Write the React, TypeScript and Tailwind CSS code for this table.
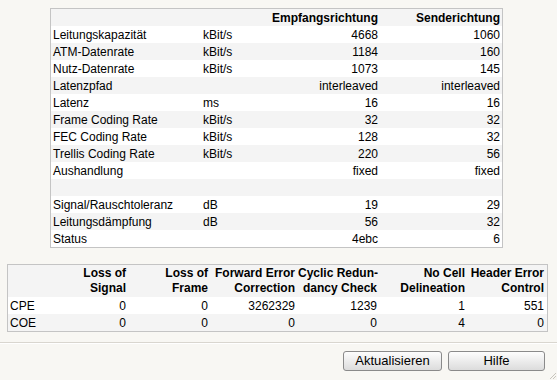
const rows: [string, string, string, string][] = [
  ['Leitungskapazität', 'kBit/s', '4668', '1060'],
  ['ATM-Datenrate', 'kBit/s', '1184', '160'],
  ['Nutz-Datenrate', 'kBit/s', '1073', '145'],
  ['Latenzpfad', '', 'interleaved', 'interleaved'],
  ['Latenz', 'ms', '16', '16'],
  ['Frame Coding Rate', 'kBit/s', '32', '32'],
  ['FEC Coding Rate', 'kBit/s', '128', '32'],
  ['Trellis Coding Rate', 'kBit/s', '220', '56'],
  ['Aushandlung', '', 'fixed', 'fixed'],
  ['', '', '', ''],
  ['Signal/Rauschtoleranz', 'dB', '19', '29'],
  ['Leitungsdämpfung', 'dB', '56', '32'],
  ['Status', '', '4ebc', '6'],
]

const errorHeads: [string, string][] = [
  ['Loss of', 'Signal'],
  ['Loss of', 'Frame'],
  ['Forward Error', 'Correction'],
  ['Cyclic Redun-', 'dancy Check'],
  ['No Cell', 'Delineation'],
  ['Header Error', 'Control'],
]

const errorRows: [string, string[]][] = [
  ['CPE', ['0', '0', '3262329', '1239', '1', '551']],
  ['COE', ['0', '0', '0', '0', '4', '0']],
]

const lineCols = 'grid grid-cols-[150px_70px_110px_1fr]'
const errCols = 'grid grid-cols-[40px_81px_82px_87px_82px_88px_1fr]'

export default function App() {
  return (
    <div
      className="w-[557px] h-[380px] bg-[#f8f7f3] text-black text-[12px] overflow-hidden flex flex-col relative"
      style={{ fontFamily: '"Liberation Sans", Arial, sans-serif' }}
    >
      {/* line statistics */}
      <div className="mt-[8px] ml-[50px] w-[453px] border border-[#c4c4c4] bg-white">
        <div className={`${lineCols} h-[17px] items-center bg-[#f4f4f4] font-bold`}>
          <span />
          <span />
          <span className="text-right pr-[3px]">Empfangsrichtung</span>
          <span className="text-right pr-[2px]">Senderichtung</span>
        </div>
        {rows.map((r, i) => (
          <div
            key={i}
            className={`${lineCols} h-[17px] items-center ${i % 2 === 1 ? 'bg-[#f4f4f4]' : 'bg-white'}`}
          >
            <span className="pl-[2px]">{r[0]}</span>
            <span className="pl-[2px]">{r[1]}</span>
            <span className="text-right pr-[3px]">{r[2]}</span>
            <span className="text-right pr-[2px]">{r[3]}</span>
          </div>
        ))}
      </div>

      {/* error counters */}
      <div className="mt-[16px] ml-[7px] w-[541px] border border-[#c4c4c4] bg-white">
        <div className={`${errCols} h-[32px] items-center bg-[#f4f4f4] font-bold leading-[15px]`}>
          <span />
          {errorHeads.map((h, i) => (
            <span key={i} className="text-right pr-[3px] whitespace-nowrap">
              {h[0]}
              <br />
              {h[1]}
            </span>
          ))}
        </div>
        {errorRows.map(([name, vals], i) => (
          <div
            key={name}
            className={`${errCols} h-[17px] items-center ${i % 2 === 1 ? 'bg-[#f4f4f4]' : 'bg-white'}`}
          >
            <span className="pl-[2px]">{name}</span>
            {vals.map((v, j) => (
              <span key={j} className="text-right pr-[3px]">{v}</span>
            ))}
          </div>
        ))}
      </div>

      <div className="mt-[10px] border-t border-[#d9d6cf] border-b-white border-b" />

      <div className="flex justify-end gap-[6px] pr-[12px] mt-[7px]">
        <button className="w-[99px] h-[20px] rounded-[3px] border border-[#8a8a8a] bg-gradient-to-b from-[#fdfdfd] to-[#dcdcdc] text-[13px] leading-[18px]">
          Aktualisieren
        </button>
        <button className="w-[97px] h-[20px] rounded-[3px] border border-[#8a8a8a] bg-gradient-to-b from-[#fdfdfd] to-[#dcdcdc] text-[13px] leading-[18px]">
          Hilfe
        </button>
      </div>

      {/* resize grip */}
      <svg className="absolute right-[1px] bottom-[1px]" width="8" height="8" viewBox="0 0 8 8">
        <path d="M8 2 L2 8 M8 5 L5 8" stroke="#c8c5bd" strokeWidth="1" />
      </svg>
    </div>
  )
}
